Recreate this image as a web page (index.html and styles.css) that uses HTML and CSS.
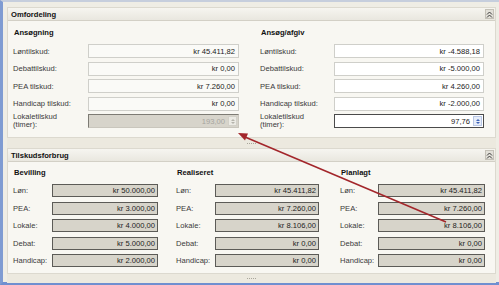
FILE: index.html
```html
<!DOCTYPE html>
<html lang="da">
<head>
    <meta charset="UTF-8">
    <title>Omfordeling</title>
    <link rel="stylesheet" href="styles.css">
</head>
<body>
<div class="window">
    <section class="panel">
        <header class="panel-head">
            <span>Omfordeling</span>
            <span class="collapse"><svg width="7" height="7" viewBox="0 0 7 7"><path d="M1 3.5L3.5 1L6 3.5M1 6.5L3.5 4L6 6.5" fill="none" stroke="#3c3c3c" stroke-width="1"/></svg></span>
        </header>
        <div class="panel-body top-body">
            <div class="col col-a">
                <h3>Ansøgning</h3>
                <div class="rows">
                    <label>Løntilskud:</label><div class="field soft">kr 45.411,82</div>
                    <label>Debattilskud:</label><div class="field soft">kr 0,00</div>
                    <label>PEA tilskud:</label><div class="field soft">kr 7.260,00</div>
                    <label>Handicap tilskud:</label><div class="field soft">kr 0,00</div>
                    <label class="two">Lokaletilskud<br>(timer):</label>
                    <div class="field disabled">193,00<span class="spin dim"><i class="up"></i><i class="down"></i></span></div>
                </div>
            </div>
            <div class="col col-b">
                <h3>Ansøg/afgiv</h3>
                <div class="rows">
                    <label>Løntilskud:</label><div class="field">kr -4.588,18</div>
                    <label>Debattilskud:</label><div class="field">kr -5.000,00</div>
                    <label>PEA tilskud:</label><div class="field">kr 4.260,00</div>
                    <label>Handicap tilskud:</label><div class="field">kr -2.000,00</div>
                    <label class="two">Lokaletilskud<br>(timer):</label>
                    <div class="field active">97,76<span class="spin"><i class="up"></i><i class="down"></i></span></div>
                </div>
            </div>
        </div>
    </section>

    <div class="splitter"><span class="grip"></span></div>

    <section class="panel">
        <header class="panel-head">
            <span>Tilskudsforbrug</span>
            <span class="collapse"><svg width="7" height="7" viewBox="0 0 7 7"><path d="M1 3.5L3.5 1L6 3.5M1 6.5L3.5 4L6 6.5" fill="none" stroke="#3c3c3c" stroke-width="1"/></svg></span>
        </header>
        <div class="panel-body bottom-body">
            <div class="col c1">
                <h3>Bevilling</h3>
                <div class="rows">
                    <label>Løn:</label><div class="field ro">kr 50.000,00</div>
                    <label>PEA:</label><div class="field ro">kr 3.000,00</div>
                    <label>Lokale:</label><div class="field ro">kr 4.000,00</div>
                    <label>Debat:</label><div class="field ro">kr 5.000,00</div>
                    <label>Handicap:</label><div class="field ro">kr 2.000,00</div>
                </div>
            </div>
            <div class="col c2">
                <h3>Realiseret</h3>
                <div class="rows">
                    <label>Løn:</label><div class="field ro">kr 45.411,82</div>
                    <label>PEA:</label><div class="field ro">kr 7.260,00</div>
                    <label>Lokale:</label><div class="field ro">kr 8.106,00</div>
                    <label>Debat:</label><div class="field ro">kr 0,00</div>
                    <label>Handicap:</label><div class="field ro">kr 0,00</div>
                </div>
            </div>
            <div class="col c3">
                <h3>Planlagt</h3>
                <div class="rows">
                    <label>Løn:</label><div class="field ro">kr 45.411,82</div>
                    <label>PEA:</label><div class="field ro">kr 7.260,00</div>
                    <label>Lokale:</label><div class="field ro">kr 8.106,00</div>
                    <label>Debat:</label><div class="field ro">kr 0,00</div>
                    <label>Handicap:</label><div class="field ro">kr 0,00</div>
                </div>
            </div>
        </div>
    </section>

    <div class="splitter low"><span class="grip"></span></div>

    <!-- red annotation arrow drawn over the form -->
    <svg class="arrow" width="499" height="285" viewBox="0 0 499 285">
        <line x1="446" y1="222" x2="245" y2="137" stroke="#a3262b" stroke-width="1.6"/>
        <polygon points="238,133 248,133.5 245,140.5" fill="#a3262b"/>
    </svg>
</div>
</body>
</html>
```

FILE: styles.css
```css
*{
    margin: 0;
    padding: 0;
    box-sizing: border-box;
}
body{
    width: 499px;
    height: 285px;
    overflow: hidden;
    font-family: "Liberation Sans", Arial, sans-serif;
    font-size: 7.6px;
    color: #3a3a3a;
    background: #efede5;
}
.window{
    position: relative;
    width: 499px;
    height: 285px;
    border-top: 2px solid #c6cedd;
    border-left: 3px solid #7f9bd2;
    border-bottom: 3px solid #6f8fd0;
    padding: 5px 3px 0 4px;
    background: #efede5;
}
.panel{
    border: 1px solid #dcd9cf;
    background: #f8f7f2;
}
.panel-head{
    height: 13px;
    display: flex;
    align-items: center;
    justify-content: space-between;
    padding: 0 1px 0 3px;
    background: linear-gradient(#f6f5f0, #e9e7df);
    border-bottom: 1px solid #d3d0c6;
    font-weight: bold;
    color: #111;
}
.collapse{
    width: 9px;
    height: 10px;
    display: flex;
    align-items: center;
    justify-content: center;
    background: #e2e0d8;
    border: 1px solid #c4c1b7;
}
.panel-body{
    display: flex;
    padding-left: 5px;
}
.top-body{
    height: 116px;
    padding-top: 7px;
}
.bottom-body{
    height: 111px;
    padding-top: 6px;
}
h3{
    font-size: 7.6px;
    font-weight: bold;
    color: #111;
    height: 10px;
    line-height: 10px;
    padding-left: 1px;
}
.rows{
    display: grid;
    align-items: center;
}
.top-body .rows{
    margin-top: 6px;
    grid-auto-rows: 14px;
    row-gap: 3.6px;
}
.bottom-body .rows{
    margin-top: 6px;
    grid-auto-rows: 13px;
    row-gap: 4.6px;
}
.col-a{ width: 226px; }
.col-a .rows{ grid-template-columns: 75px 151px; }
.col-b{ width: 224px; margin-left: 21px; }
.col-b .rows{ grid-template-columns: 74px 150px; }
.c1{ width: 145px; }
.c1 .rows{ grid-template-columns: 39px 106px; }
.c2{ width: 143px; margin-left: 18px; }
.c2 .rows{ grid-template-columns: 39px 104px; }
.c3{ width: 145px; margin-left: 21px; }
.c3 .rows{ grid-template-columns: 38px 107px; }
label{
    white-space: nowrap;
}
label.two{
    line-height: 8px;
}
.field{
    height: 100%;
    display: flex;
    align-items: center;
    justify-content: flex-end;
    padding-right: 3px;
    background: #fff;
    border: 1px solid #cfcfca;
    color: #222;
}
.field.soft{
    background: #fafaf7;
}
.field.disabled{
    background: #d7d4cb;
    border-color: #7d7b74 #c9c6bd #c9c6bd #7d7b74;
    color: #a6a49e;
    padding-right: 1px;
}
.field.active{
    border: 1px solid #4a4a4a;
    padding-right: 1px;
}
.field.ro{
    background: #d7d4ca;
    border: 1px solid #5c5b57;
    color: #222;
    padding-right: 2px;
}
.spin{
    width: 9px;
    height: 10px;
    margin-left: 3px;
    display: flex;
    flex-direction: column;
    align-items: center;
    justify-content: center;
    gap: 1px;
    background: #e6ecf8;
    border: 1px solid #b9c7e6;
}
.spin i{
    width: 0;
    height: 0;
    border-left: 2px solid transparent;
    border-right: 2px solid transparent;
}
.spin .up{ border-bottom: 2px solid #3d63b8; }
.spin .down{ border-top: 2px solid #3d63b8; }
.spin.dim{
    background: #ebeae4;
    border-color: #d2d0c8;
}
.spin.dim .up{ border-bottom-color: #b5b3ab; }
.spin.dim .down{ border-top-color: #b5b3ab; }
.splitter{
    height: 10px;
    display: flex;
    align-items: center;
    justify-content: center;
    background: #ece9df;
}
.splitter.low{
    height: 9px;
}
.grip{
    width: 10px;
    height: 1px;
    background: repeating-linear-gradient(90deg, #a9a69b 0 1px, transparent 1px 2px);
}
.arrow{
    position: absolute;
    left: -3px;
    top: -2px;
    pointer-events: none;
}
```
